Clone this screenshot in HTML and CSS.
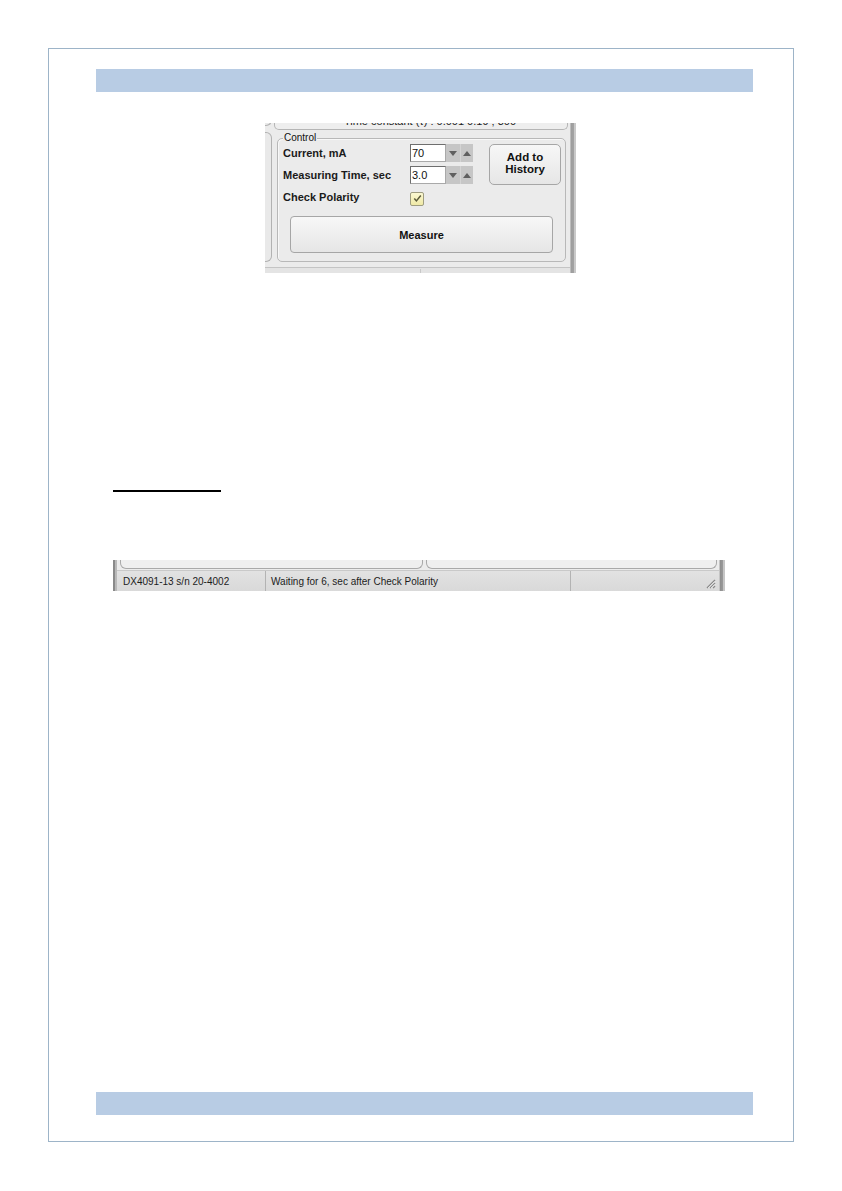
FILE: index.html
```html
<!DOCTYPE html>
<html>
<head>
<meta charset="utf-8">
<link rel="stylesheet" href="styles.css">
</head>
<body>
<div class="page">
  <div class="band"></div>

  <div class="shot1">
    <div class="s1-left">
      <div class="lp lp-a"></div>
      <div class="lp lp-b"></div>
    </div>
    <div class="s1-main">
      <div class="s1-top"><span>Time constant (τ) : 0.001 0.19 ; 300</span></div>
      <div class="gb">
        <span class="gb-label">Control</span>
        <div class="gb-top">
          <div class="form">
            <div class="row">
              <span class="lbl">Current, mA</span>
              <span class="inp">70</span>
              <span class="spin">
                <span class="sb"><svg width="8" height="5" viewBox="0 0 8 5"><path d="M0 0H8L4 5Z" fill="#5f5f5f"/></svg></span>
                <span class="sb"><svg width="8" height="5" viewBox="0 0 8 5"><path d="M0 5H8L4 0Z" fill="#5f5f5f"/></svg></span>
              </span>
            </div>
            <div class="row">
              <span class="lbl">Measuring Time, sec</span>
              <span class="inp">3.0</span>
              <span class="spin">
                <span class="sb"><svg width="8" height="5" viewBox="0 0 8 5"><path d="M0 0H8L4 5Z" fill="#5f5f5f"/></svg></span>
                <span class="sb"><svg width="8" height="5" viewBox="0 0 8 5"><path d="M0 5H8L4 0Z" fill="#5f5f5f"/></svg></span>
              </span>
            </div>
            <div class="row row-chk">
              <span class="lbl">Check Polarity</span>
              <span class="chk"><svg width="11" height="11" viewBox="0 0 11 11"><path d="M2.3 5.6L4.4 7.9L8.8 2.6" fill="none" stroke="#5a5a3a" stroke-width="1.5"/></svg></span>
            </div>
          </div>
          <div class="btn btn-add">Add to<br>History</div>
        </div>
        <div class="btn btn-measure">Measure</div>
      </div>
    </div>
    <div class="s1-right"></div>
    <div class="s1-bottom"><span class="s1-sep"></span></div>
  </div>

  <div class="uline"></div>

  <div class="shot2">
    <div class="s2-left"></div>
    <div class="s2-main">
      <div class="s2-top">
        <div class="pn pn1"></div>
        <div class="pn pn2"></div>
      </div>
      <div class="status">
        <span class="cell c1">DX4091-13 s/n 20-4002</span>
        <span class="cell c2">Waiting for 6, sec after Check Polarity</span>
        <span class="cell c3"></span>
        <span class="grip"><svg width="11" height="11" viewBox="0 0 11 11"><path d="M10 2L2 10M10 5L5 10M10 8L8 10" stroke="#8a8a8a" stroke-width="1.4"/><path d="M10 3.3L3.3 10M10 6.3L6.3 10" stroke="#ffffff" stroke-width="0.8"/></svg></span>
      </div>
    </div>
    <div class="s2-right"></div>
  </div>

  <div class="band band-foot"></div>
</div>
</body>
</html>
```

FILE: styles.css
```css
* { box-sizing: border-box; }
html, body { margin: 0; padding: 0; background: #ffffff; }
body { font-family: "Liberation Sans", Arial, sans-serif; }

.page {
  margin: 48px 0 0 48px;
  width: 746px;
  height: 1094px;
  border: 1px solid #9db4c8;
  padding: 20px 0 26px 47px;
  display: flex;
  flex-direction: column;
  align-items: flex-start;
}
.band {
  width: 657px;
  height: 23px;
  background: #b8cce4;
  flex: none;
}
.band-foot { margin-top: auto; }

/* ---------- screenshot 1 ---------- */
.shot1 {
  margin: 31px 0 0 169px;
  width: 311px;
  height: 150px;
  background: #ebebeb;
  display: grid;
  grid-template-columns: 7px 298px 6px;
  grid-template-rows: 144px 6px;
  overflow: hidden;
  flex: none;
}
.s1-left {
  display: flex;
  flex-direction: column;
  gap: 6px;
}
.lp {
  border: 1px solid #b2b2b2;
  border-left: none;
  background: #e9e9e9;
}
.lp-a { height: 6px; margin-top: -3px; border-top: none; border-radius: 0 0 6px 0; }
.lp-b { height: 130px; border-radius: 0 6px 6px 0; }
.s1-main {
  display: flex;
  flex-direction: column;
  align-items: flex-start;
}
.s1-top {
  margin: -14px 2px 0 2px;
  width: 294px;
  height: 21px;
  border: 1px solid #b5b5b5;
  border-top: none;
  border-radius: 0 0 5px 5px;
  background: #eeeeee;
  display: flex;
  align-items: flex-end;
  justify-content: center;
  font-size: 11px;
  line-height: 13px;
  color: #222;
  padding: 0 0 1px 18px;
}
.gb {
  position: relative;
  margin: 8px 0 0 5px;
  width: 289px;
  height: 124px;
  border: 1px solid #b8b8b8;
  border-radius: 5px;
  padding: 5px 0 0 5px;
  box-shadow: inset 1px 1px 0 #f8f8f8;
}
.gb-label {
  position: absolute;
  top: -7px;
  left: 5px;
  padding: 0 1px;
  background: #ebebeb;
  font-size: 10px;
  line-height: 12px;
  color: #111;
}
.gb-top {
  display: flex;
  align-items: flex-start;
}
.form {
  width: 196px;
  display: flex;
  flex-direction: column;
  gap: 4px;
}
.row {
  display: flex;
  align-items: center;
  height: 18px;
}
.lbl {
  width: 127px;
  font-size: 11px;
  font-weight: bold;
  color: #1a1a1a;
  white-space: nowrap;
}
.inp {
  width: 36px;
  height: 18px;
  background: #ffffff;
  border: 1px solid #a9a9a9;
  border-top-color: #6e6e6e;
  border-left-color: #6e6e6e;
  font-size: 11px;
  line-height: 16px;
  padding-left: 1px;
  color: #111;
}
.spin {
  display: flex;
  height: 18px;
  background: #c6c6c6;
}
.sb {
  width: 14px;
  height: 18px;
  display: flex;
  align-items: center;
  justify-content: center;
}
.sb + .sb { border-left: 1px solid #d4d4d4; width: 13px; }
.chk {
  width: 14px;
  height: 14px;
  margin-top: 3px;
  border: 1px solid #9e9c80;
  border-radius: 2px;
  background: linear-gradient(#fbf8d2, #efe9a6);
  display: flex;
  align-items: center;
  justify-content: center;
}
.btn {
  border: 1px solid #a6a6a6;
  border-radius: 5px;
  background: linear-gradient(#f7f7f7, #e6e6e6);
  font-weight: bold;
  font-size: 11px;
  color: #111;
  display: flex;
  align-items: center;
  justify-content: center;
  text-align: center;
}
.btn-add {
  margin-left: 10px;
  width: 72px;
  height: 41px;
  font-size: 11.5px;
  line-height: 12px;
  padding-bottom: 3px;
}
.btn-measure {
  margin: 10px 0 0 7px;
  width: 263px;
  height: 37px;
  border-radius: 4px;
}
.s1-right {
  grid-row: 1 / 3;
  grid-column: 3;
  background: linear-gradient(90deg, #bdbdbd 0, #bdbdbd 1px, #9d9d9d 1px, #a3a3a3 4px, #c9c9c9 4px);
}
.s1-bottom {
  grid-row: 2;
  grid-column: 1 / 3;
  border-top: 1px solid #c4c4c4;
  background: #e4e4e4;
  position: relative;
}
.s1-sep {
  position: absolute;
  left: 155px;
  top: 1px;
  bottom: 0;
  width: 1px;
  background: #c8c8c8;
}

/* ---------- underline ---------- */
.uline {
  margin: 217px 0 0 17px;
  width: 108px;
  height: 2px;
  background: #000;
  flex: none;
}

/* ---------- screenshot 2 ---------- */
.shot2 {
  margin: 68px 0 0 17px;
  width: 612px;
  height: 31px;
  display: grid;
  grid-template-columns: 4px 602px 6px;
  background: #e9e9e9;
  flex: none;
}
.s2-left {
  background: linear-gradient(90deg, #8a8a8a 0, #8a8a8a 2px, #b9b9b9 2px);
}
.s2-right {
  background: linear-gradient(90deg, #c4c4c4 0, #c4c4c4 1px, #8e8e8e 1px, #9a9a9a 4px, #c6c6c6 4px);
}
.s2-main {
  display: flex;
  flex-direction: column;
}
.s2-top {
  height: 10px;
  display: flex;
  gap: 3px;
  padding-left: 3px;
  background: #ececec;
}
.pn {
  height: 9px;
  border: 1px solid #a9a9a9;
  border-top: none;
  border-radius: 0 0 6px 6px;
  background: #efefef;
}
.pn1 { width: 303px; }
.pn2 { width: 291px; }
.status {
  height: 21px;
  display: flex;
  align-items: center;
  background: linear-gradient(#e2e2e2, #d9d9d9);
  border-top: 1px solid #c9c9c9;
  font-size: 10px;
  color: #1c1c1c;
}
.cell {
  height: 100%;
  display: flex;
  align-items: center;
  white-space: nowrap;
}
.c1 { width: 149px; padding-left: 6px; border-right: 1px solid #b3b3b3; }
.c2 { width: 305px; padding-left: 5px; border-right: 1px solid #b3b3b3; }
.c3 { flex: 1; }
.grip {
  width: 14px;
  height: 100%;
  display: flex;
  align-items: flex-end;
  padding-bottom: 2px;
}
```
